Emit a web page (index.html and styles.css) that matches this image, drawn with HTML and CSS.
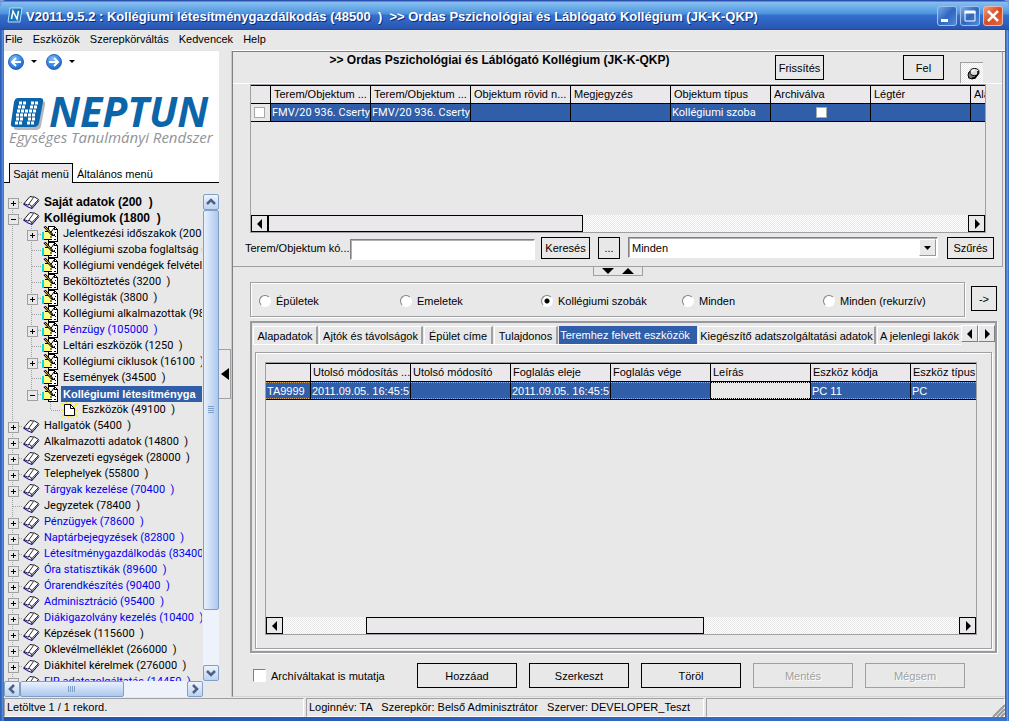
FILE: index.html
```html
<!DOCTYPE html>
<html lang="hu">
<head>
<meta charset="utf-8">
<title>Neptun – Kollégiumi létesítménygazdálkodás</title>
<link rel="stylesheet" href="styles.css">
</head>
<body>
<svg width="0" height="0" class="defs" aria-hidden="true">
  <symbol id="book" viewBox="0 0 17 16">
    <path d="M1 10.500l4 2.500 4 1.500 7-8" fill="none" stroke="#0000e0"/>
    <path d="M1 9.500L7 2.500l3 .5 1.500 0 4 2.500-6.500 7-2.500-2-2 .5z" fill="#fff" stroke="#000" stroke-width=".9"/>
    <path d="M5.500 10.500l5-7" fill="none" stroke="#000" stroke-width=".8"/>
    <path d="M9 12.500v2M1 9.500v1.500" stroke="#000"/>
  </symbol>
  <symbol id="form" viewBox="0 0 17 16">
    <path d="M6.500 0.500h6l3 3v12h-9z" fill="#fff" stroke="#000" shape-rendering="crispEdges"/>
    <path d="M12.500 0v3.500H16" fill="none" stroke="#000" shape-rendering="crispEdges"/>
    <path d="M13 6.500h1M12 8.500h1M13 10.500h1M9 13.500h1M12 13.500h2" stroke="#000"/>
    <path d="M2 6h3l2-1h3v3h2v1.500h-2V13H8v1H2z" fill="#ffff80"/>
    <path d="M3 5.500h3M10 9.500h3M10 11h-2M9 13.500H2" fill="none" stroke="#000"/>
    <path d="M0 6h2v8H0z" fill="#00dede"/>
    <path d="M2.500 0.500l8 8.500" stroke="#000" stroke-width="2.500"/>
    <path d="M3 1l6.500 7" stroke="#f0d000"/>
    <path d="M12 2L8.500 7" stroke="#000"/>
  </symbol>
  <symbol id="page" viewBox="0 0 17 16">
    <path d="M0 1l5 4M0 15l5-4M17 1l-4 4M17 15l-4-4M5 0l2 4M7 16l1-3M11 16l-1-3M0 8h4M13 8h4M10 0v3" stroke="#ffee00" stroke-width="1.500"/>
    <path d="M3.500 2.500h6l4 4v7h-10z" fill="#fff" stroke="#000"/>
    <path d="M9.500 2v4.500H14" fill="none" stroke="#000"/>
  </symbol>
  <symbol id="up" viewBox="0 0 14 14"><path d="M3 9l4-4 4 4" fill="none" stroke="#4d6185" stroke-width="2.500"/></symbol>
  <symbol id="down" viewBox="0 0 14 14"><path d="M3 5l4 4 4-4" fill="none" stroke="#4d6185" stroke-width="2.500"/></symbol>
  <symbol id="left" viewBox="0 0 14 14"><path d="M9 3L5 7l4 4" fill="none" stroke="#4d6185" stroke-width="2.500"/></symbol>
  <symbol id="right" viewBox="0 0 14 14"><path d="M5 3l4 4-4 4" fill="none" stroke="#4d6185" stroke-width="2.500"/></symbol>
  <symbol id="tri-l" viewBox="0 0 10 10"><path d="M7 0v10L2 5z"/></symbol>
  <symbol id="tri-r" viewBox="0 0 10 10"><path d="M3 0v10l5-5z"/></symbol>
  <radialGradient id="ball" cx=".4" cy=".3" r=".75"><stop offset="0" stop-color="#7fc0fa"/><stop offset=".6" stop-color="#3585e0"/><stop offset="1" stop-color="#1c5fc4"/></radialGradient>
</svg>
<div class="window">
  <header class="titlebar">
    <svg class="app-icon" width="16" height="16" viewBox="0 0 16 16"><path d="M3 1h12l-2 14H1z" fill="#1a76bd" stroke="#b8dcf4"/><path d="M4.500 12l1.500-8 4 8 1.500-8" fill="none" stroke="#fff" stroke-width="1.500"/></svg>
    <h1>V2011.9.5.2 : Kollégiumi létesítménygazdálkodás (48500  )  &gt;&gt; Ordas Pszichológiai és Láblógató Kollégium (JK-K-QKP)</h1>
    <div class="win-buttons">
      <button aria-label="Kis méret"><svg width="18" height="18"><path d="M3 12h7v3H3z" fill="#fff"/></svg></button>
      <button aria-label="Teljes méret"><svg width="18" height="18"><path d="M4 5h10v9H4z" fill="none" stroke="#fff"/><path d="M3.500 5h11" stroke="#fff" stroke-width="3"/></svg></button>
      <button class="close" aria-label="Bezárás"><svg width="18" height="18"><path d="M4 4l10 10M14 4L4 14" stroke="#fff" stroke-width="2.500"/></svg></button>
    </div>
  </header>
  <nav class="menubar"><button>File</button><button>Eszközök</button><button>Szerepkörváltás</button><button>Kedvencek</button><button>Help</button></nav>
  <div class="body">
    <aside class="sidebar">
      <div class="brand">
        <div class="history">
          <button aria-label="Vissza"><svg width="16" height="16"><circle cx="8" cy="8" r="7.500" fill="url(#ball)" stroke="#2a66b8"/><path d="M13 8H4M8 4L4 8l4 4" fill="none" stroke="#fff" stroke-width="2"/></svg></button>
          <button aria-label="Vissza lista"><svg width="6" height="4"><path d="M0 0h6L3 3z"/></svg></button>
          <button aria-label="Előre"><svg width="16" height="16"><circle cx="8" cy="8" r="7.500" fill="url(#ball)" stroke="#2a66b8"/><path d="M3 8h9M8 4l4 4-4 4" fill="none" stroke="#fff" stroke-width="2"/></svg></button>
          <button aria-label="Előre lista"><svg width="6" height="4"><path d="M0 0h6L3 3z"/></svg></button>
        </div>
        <svg class="logo" width="210" height="56" viewBox="0 0 210 56">
          <path d="M14 7h22q4 0 3 4l-4 21q-1 4-5 4H11q-4 0-3-4l3-21q0-4 3-4z" fill="#b4b8bc"/>
          <path d="M12 4h22q4 0 3 4l-4 21q-1 4-5 4H8q-4 0-3-4L8 8q1-4 4-4z" fill="#0b65a8"/>
          <path d="M13 9h7M25 9h7M12 13h7M24 13h7M11 17h19M10 21h19M10 25h7M22 25h7M9 29h7M21 29h7" stroke="#fff" stroke-width="3" stroke-dasharray="3 1" fill="none"/>
          <text x="43" y="33" class="logo-name">NEPTUN</text>
          <text x="3" y="49" class="logo-sub">Egységes Tanulmányi Rendszer</text>
        </svg>
      </div>
      <div class="side-tabs"><button class="on">Saját menü</button><button>Általános menü</button></div>
      <div class="tree-area">
        <ul class="tree">
          <li class="first"><i class="g plus"></i><svg><use href="#book"/></svg><b>Saját adatok (200  )</b></li>
          <li><i class="g minus"></i><svg><use href="#book"/></svg><b>Kollégiumok (1800  )</b></li>
          <li><i class="g line"></i><i class="g plus"></i><svg><use href="#form"/></svg><span>Jelentkezési időszakok (2000</span></li>
          <li><i class="g line"></i><i class="g"></i><svg><use href="#form"/></svg><span>Kollégiumi szoba foglaltság (3</span></li>
          <li><i class="g line"></i><i class="g"></i><svg><use href="#form"/></svg><span>Kollégiumi vendégek felvétele</span></li>
          <li><i class="g line"></i><i class="g"></i><svg><use href="#form"/></svg><span>Beköltöztetés (3200  )</span></li>
          <li><i class="g line"></i><i class="g plus"></i><svg><use href="#form"/></svg><span>Kollégisták (3800  )</span></li>
          <li><i class="g line"></i><i class="g"></i><svg><use href="#form"/></svg><span>Kollégiumi alkalmazottak (982</span></li>
          <li class="blue"><i class="g line"></i><i class="g plus"></i><svg><use href="#form"/></svg><span>Pénzügy (105000  )</span></li>
          <li><i class="g line"></i><i class="g"></i><svg><use href="#form"/></svg><span>Leltári eszközök (1250  )</span></li>
          <li><i class="g line"></i><i class="g plus"></i><svg><use href="#form"/></svg><span>Kollégiumi ciklusok (16100  )</span></li>
          <li><i class="g line"></i><i class="g"></i><svg><use href="#form"/></svg><span>Események (34500  )</span></li>
          <li class="selected"><i class="g line"></i><i class="g minus last"></i><svg><use href="#form"/></svg><b>Kollégiumi létesítményga</b></li>
          <li><i class="g line"></i><i class="g none"></i><i class="g last"></i><svg><use href="#page"/></svg><span>Eszközök (49100  )</span></li>
          <li><i class="g plus"></i><svg><use href="#book"/></svg><span>Hallgatók (5400  )</span></li>
          <li><i class="g plus"></i><svg><use href="#book"/></svg><span>Alkalmazotti adatok (14800  )</span></li>
          <li><i class="g plus"></i><svg><use href="#book"/></svg><span>Szervezeti egységek (28000  )</span></li>
          <li><i class="g plus"></i><svg><use href="#book"/></svg><span>Telephelyek (55800  )</span></li>
          <li class="blue"><i class="g plus"></i><svg><use href="#book"/></svg><span>Tárgyak kezelése (70400  )</span></li>
          <li><i class="g"></i><svg><use href="#book"/></svg><span>Jegyzetek (78400  )</span></li>
          <li class="blue"><i class="g plus"></i><svg><use href="#book"/></svg><span>Pénzügyek (78600  )</span></li>
          <li class="blue"><i class="g plus"></i><svg><use href="#book"/></svg><span>Naptárbejegyzések (82800  )</span></li>
          <li class="blue"><i class="g plus"></i><svg><use href="#book"/></svg><span>Létesítménygazdálkodás (83400</span></li>
          <li class="blue"><i class="g plus"></i><svg><use href="#book"/></svg><span>Óra statisztikák (89600  )</span></li>
          <li class="blue"><i class="g plus"></i><svg><use href="#book"/></svg><span>Órarendkészítés (90400  )</span></li>
          <li class="blue"><i class="g plus"></i><svg><use href="#book"/></svg><span>Adminisztráció (95400  )</span></li>
          <li class="blue"><i class="g plus"></i><svg><use href="#book"/></svg><span>Diákigazolvány kezelés (10400  )</span></li>
          <li><i class="g plus"></i><svg><use href="#book"/></svg><span>Képzések (115600  )</span></li>
          <li><i class="g plus"></i><svg><use href="#book"/></svg><span>Oklevélmelléklet (266000  )</span></li>
          <li><i class="g plus"></i><svg><use href="#book"/></svg><span>Diákhitel kérelmek (276000  )</span></li>
          <li class="blue"><i class="g plus"></i><svg><use href="#book"/></svg><span>FIR adatszolgáltatás (14450  )</span></li>
        </ul>
        <div class="xp-v"><button aria-label="Fel görgetés"><svg><use href="#up"/></svg></button><div class="track"><div class="thumb"></div></div><button aria-label="Le görgetés"><svg><use href="#down"/></svg></button></div>
        <div class="xp-h"><button aria-label="Balra görgetés"><svg><use href="#left"/></svg></button><div class="track"><div class="thumb"></div></div><button aria-label="Jobbra görgetés"><svg><use href="#right"/></svg></button></div>
      </div>
    </aside>
    <div class="splitter"><button aria-label="Menü elrejtése"><svg width="9" height="12"><path d="M9 0v12L1 6z"/></svg></button></div>
    <main class="main">
      <section class="top-panel">
        <div class="heading">
          <h2>&gt;&gt; Ordas Pszichológiai és Láblógató Kollégium (JK-K-QKP)</h2>
          <button class="btn refresh">Frissítés</button>
          <button class="btn fel">Fel</button>
          <button class="pin" aria-label="Rögzítés"><svg width="14" height="14" viewBox="0 0 14 14"><path d="M2 11L6 8" stroke="#000"/><ellipse cx="6" cy="8" rx="4" ry="4" fill="#777" stroke="#000"/><ellipse cx="8.500" cy="5" rx="4.500" ry="3.500" fill="#ddd" stroke="#000"/><path d="M6 5q1-2 3-2" stroke="#fff" stroke-width="1.500" fill="none"/><path d="M12 4v3l-3 4H6" fill="none" stroke="#000" stroke-width="1.500"/></svg></button>
        </div>
        <div class="grid upper">
          <div class="grid-view">
            <table>
              <colgroup><col class="check"><col><col><col><col><col><col><col><col></colgroup>
              <tr><th></th><th>Terem/Objektum ...</th><th>Terem/Objektum ...</th><th>Objektum rövid n...</th><th>Megjegyzés</th><th>Objektum típus</th><th>Archiválva</th><th>Légtér</th><th>Ala</th></tr>
              <tr><td class="plain"><input type="checkbox" aria-label="Sor kijelölése"></td><td>FMV/20 936. Csertyi</td><td>FMV/20 936. Csertyi</td><td></td><td></td><td>Kollégiumi szoba</td><td class="mid"><input type="checkbox" aria-label="Archiválva"></td><td></td><td></td></tr>
            </table>
          </div>
          <div class="bar"><button aria-label="Balra"><svg><use href="#tri-l"/></svg></button><div class="rail"><div class="knob"></div></div><button aria-label="Jobbra"><svg><use href="#tri-r"/></svg></button></div>
        </div>
        <div class="search">
          <label for="code">Terem/Objektum kó...</label><input type="text" id="code">
          <button class="btn">Keresés</button><button class="btn dots">...</button>
          <div class="combo"><select aria-label="Szűrő"><option>Minden</option></select><span><svg width="7" height="4"><path d="M0 0h7L3.500 4z"/></svg></span></div>
          <button class="btn filter">Szűrés</button>
        </div>
        <div class="collapse"><button aria-label="Le"><svg width="12" height="6"><path d="M0 0h12L6 6z"/></svg></button><button aria-label="Fel"><svg width="12" height="6"><path d="M0 6h12L6 0z"/></svg></button></div>
      </section>
      <section class="levels">
        <div class="radios">
          <label><input type="radio" name="level">Épületek</label>
          <label><input type="radio" name="level">Emeletek</label>
          <label><input type="radio" name="level" checked>Kollégiumi szobák</label>
          <label><input type="radio" name="level">Minden</label>
          <label><input type="radio" name="level">Minden (rekurzív)</label>
        </div>
        <button class="btn go">-&gt;</button>
      </section>
      <section class="tab-panel">
        <div class="tabs">
          <div class="tab-list"><button>Alapadatok</button><button>Ajtók és távolságok</button><button>Épület címe</button><button>Tulajdonos</button><button class="on">Teremhez felvett eszközök</button><button>Kiegészítő adatszolgáltatási adatok</button><button>A jelenlegi lakók</button></div>
          <div class="tab-scroll"><button aria-label="Előző fül"><svg width="10" height="10"><use href="#tri-l"/></svg></button><button aria-label="Következő fül"><svg width="10" height="10"><use href="#tri-r"/></svg></button></div>
        </div>
        <div class="sheet">
          <div class="grid lower">
            <div class="grid-view">
              <table>
                <colgroup><col class="user"><col><col><col><col><col><col><col></colgroup>
                <tr><th></th><th>Utolsó módosítás ...</th><th>Utolsó módosító</th><th>Foglalás eleje</th><th>Foglalás vége</th><th>Leírás</th><th>Eszköz kódja</th><th>Eszköz típus</th></tr>
                <tr><td>TA9999</td><td>2011.09.05. 16:45:5</td><td></td><td>2011.09.05. 16:45:5</td><td></td><td class="plain"></td><td>PC 11</td><td>PC</td></tr>
              </table>
            </div>
            <div class="bar"><button aria-label="Balra"><svg><use href="#tri-l"/></svg></button><div class="rail"><div class="knob"></div></div><button aria-label="Jobbra"><svg><use href="#tri-r"/></svg></button></div>
          </div>
        </div>
      </section>
      <footer class="actions">
        <label><input type="checkbox">Archíváltakat is mutatja</label>
        <button class="btn">Hozzáad</button><button class="btn">Szerkeszt</button><button class="btn">Töröl</button><button class="btn" disabled>Mentés</button><button class="btn" disabled>Mégsem</button>
      </footer>
    </main>
  </div>
  <div class="status"><span class="s1">Letöltve 1 / 1 rekord.</span><span class="s2">Loginnév: TA   Szerepkör: Belső Adminisztrátor   Szerver: DEVELOPER_Teszt</span><span class="s3"></span>
    <svg class="grip" width="13" height="13"><path d="M1 13L13 1M5 13l8-8M9 13l4-4" stroke="#999" stroke-width="2"/></svg></div>
</div>
</body>
</html>
```
FILE: styles.css
```css
* { box-sizing: border-box; }
body {
  margin: 0;
  font: 11px/16px "Liberation Sans", Arial, sans-serif;
  color: #000;
  background: #7f97d8;
}
button, input, select { font: inherit; color: inherit; margin: 0; }
button { padding: 0; border: 0; background: none; }
svg { display: block; }
.defs { position: absolute; }

.window {
  height: 100vh;
  display: flex;
  flex-direction: column;
  padding: 0 4px 4px;
  background: linear-gradient(90deg, #2b58b0, #3b74cf 2px, #6d9fe2 3px, #2450a8 4px, #3b74cf calc(100% - 4px), #2450a8 calc(100% - 3px), #7aaaea calc(100% - 2px), #2f62bd);
  border-radius: 7px 7px 0 0;
  overflow: hidden;
}

/* title bar */
.titlebar {
  flex: none;
  height: 30px;
  margin: 0 -4px;
  padding: 0 6px 0 7px;
  display: flex;
  align-items: center;
  background: linear-gradient(#2d4fb0 0, #2d4fb0 1px, #86c0f0 2px, #6aaae8 8px, #4b90dc 14px, #3470cc 15px, #2c5fbe 24px, #2a54ac 29px, #1f3f94 30px);
}
.app-icon { margin-right: 3px; }
h1 {
  flex: 1;
  margin: 4px 0 0;
  font-size: 13px;
  line-height: 18px;
  color: #fff;
  white-space: pre;
  text-shadow: 1px 1px #0d2b78;
}
.win-buttons { display: flex; gap: 3px; margin-top: 2px; }
.win-buttons button {
  width: 20px;
  height: 20px;
  border: 1px solid #9cc0ee;
  border-radius: 3px;
  background: linear-gradient(135deg, #7aaae6, #2f66bf 50%, #4d8bd8);
}
.win-buttons .close { background: linear-gradient(135deg, #f0a080, #d84a20 50%, #e8683c); border-color: #e8b8a8; }

.menubar { flex: none; height: 20px; display: flex; gap: 10px; padding: 0 0 2px 1px; background: #e8e8e8; }

.body { flex: 1; min-height: 0; display: flex; background: #e8e8e8; }

/* sidebar */
.sidebar { flex: none; width: 215px; display: flex; flex-direction: column; }
.brand { background: #fff; height: 113px; border-top: 1px solid #e4e4e4; }
.history { display: flex; align-items: center; padding: 3px 4px 0; }
.history button:nth-child(even) { margin: 0 9px 0 7px; }
.logo { margin: 24px 0 0 2px; }
.logo-name { font: italic bold 41px "Open Sans", sans-serif; fill: #0b65a8; }
.logo-sub { font: italic 15px "Open Sans", sans-serif; fill: #909498; }
.side-tabs { flex: none; display: flex; height: 20px; background: #fff; }
.side-tabs::before { content: ""; width: 5px; border-bottom: 1px solid #000; }
.side-tabs button { border-bottom: 1px solid #000; padding: 2px 4px 0; }
.side-tabs button:last-child { flex: 1; text-align: left; }
.side-tabs .on { width: 64px; padding: 0; border: 1px solid #000; border-bottom: 0; background: #ebe8ec; }

.tree-area {
  flex: 1;
  min-height: 0;
  margin-top: 11px;
  display: grid;
  grid-template: minmax(0, 1fr) 16px / minmax(0, 1fr) 16px;
}
.tree { margin: 0; padding: 0 1px 0 0; list-style: none; overflow: hidden; }
.tree li { display: flex; height: 16px; overflow: hidden; }
.tree li > svg { flex: none; width: 17px; height: 16px; }
.tree b, .tree span { padding-left: 4px; white-space: pre; }
.tree span { font-family: Roboto, "Liberation Sans", sans-serif; }
.tree b { font-size: 12px; }
.tree .blue { color: #0000f0; }
.tree .selected b { flex: 1; margin-left: 2px; padding-left: 2px; background: #315ea8; color: #fff; overflow: hidden; font-size: 11px; }
.g {
  flex: none;
  width: 19px;
  height: 16px;
  background:
    repeating-linear-gradient(#a0a0a0 0 1px, transparent 1px 2px) 8px 0 / 1px 16px no-repeat,
    repeating-linear-gradient(90deg, #a0a0a0 0 1px, transparent 1px 2px) 9px 8px / 10px 1px no-repeat;
}
.line { background: repeating-linear-gradient(#a0a0a0 0 1px, transparent 1px 2px) 8px 0 / 1px 16px no-repeat; }
.last { background-size: 1px 8px, 10px 1px; }
.none { background: none; }
.first .g { background-position: 8px 8px, 9px 8px; }
.plus::before, .minus::before {
  content: "";
  display: block;
  width: 9px;
  height: 9px;
  margin: 4px 0 0 4px;
  border: 1px solid #a0a0a0;
}
.minus::before { background: linear-gradient(#000, #000) center / 5px 1px no-repeat #e8e8e8; }
.plus::before { background: linear-gradient(#000, #000) center / 5px 1px no-repeat, linear-gradient(#000, #000) center / 1px 5px no-repeat #e8e8e8; }

.xp-v, .xp-h { display: flex; }
.xp-v { flex-direction: column; }
.xp-v button, .xp-h button {
  flex: none;
  width: 16px;
  height: 16px;
  border: 1px solid #7f9fc8;
  border-radius: 2px;
  background: linear-gradient(#eef4fc, #bcd3ef);
}
.xp-v button svg, .xp-h button svg { width: 14px; height: 14px; }
.track { flex: 1; background: #eef2fb; }
.thumb { border: 1px solid #7f9fc8; border-radius: 2px; }
.xp-v .thumb {
  height: 88%;
  background: repeating-linear-gradient(#7f9fc8 0 1px, transparent 1px 2px) center / 6px 8px no-repeat, linear-gradient(90deg, #e8f1fc, #acc8ee);
}
.xp-h .thumb {
  width: 62%;
  height: 16px;
  background: repeating-linear-gradient(90deg, #7f9fc8 0 1px, transparent 1px 2px) center / 8px 6px no-repeat, linear-gradient(#e8f1fc, #acc8ee);
}

.splitter { flex: none; width: 13px; display: flex; align-items: center; }
.splitter button {
  width: 12px;
  height: 50px;
  display: grid;
  place-items: center;
  border: 1px solid #a0a0a0;
  border-left: 0;
  background: #ebe8ec;
}

/* main area */
.main {
  flex: 1;
  min-width: 0;
  margin-top: 1px;
  display: flex;
  flex-direction: column;
  border-left: 1px solid #808084;
  border-top: 1px solid #808084;
  border-bottom: 1px solid #d4d4d4;
  box-shadow: -1px 0 #c8c8cc, 0 -1px #fff;
}
.top-panel {
  position: relative;
  flex: none;
  margin-right: 2px;
  padding-bottom: 4px;
  border-right: 1px solid #a0a0a4;
  border-bottom: 1px solid #a0a0a4;
}
.heading { display: flex; height: 32px; padding: 3px 19px 0 17px; border-bottom: 1px solid #fff; }
h2 { flex: 1; margin: 0; padding-right: 26px; text-align: center; font-size: 12px; line-height: 10px; white-space: pre; }
.btn { flex: none; border: 1px solid #000; background: #e8e8e8; }
.btn:disabled { color: #a0a0a0; border-color: #a0a0a0; text-shadow: 1px 1px #fff; }
.refresh { width: 49px; height: 25px; margin-right: 79px; }
.fel { width: 41px; height: 25px; margin-right: 16px; }
.pin, .rail { background: repeating-conic-gradient(#fff 0 25%, #e8e8e8 0 50%) 0 0 / 2px 2px; }
.pin { width: 23px; height: 21px; margin-top: 7px; padding: 2px 0 0 5px; border: solid #a0a0a4; border-width: 1px 0 0 1px; }

.grid { display: flex; flex-direction: column; border: 1px solid #a0a0a4; }
.upper { height: 149px; margin: 0 16px 0 17px; }
.grid-view { flex: 1; min-height: 0; overflow: hidden; }
table { width: 100%; table-layout: fixed; border-collapse: separate; border-spacing: 0; border-top: 1px solid #000; }
.upper table { width: 820px; }
.lower table { width: 745px; }
col { width: 100px; }
col.check { width: 20px; }
col.user { width: 45px; }
th, td { padding: 0; height: 18px; border: solid #000; border-width: 0 1px 1px 0; text-align: left; white-space: pre; overflow: hidden; line-height: 17px; }
th { padding-left: 3px; font-weight: normal; background: #ebe8ec; }
td { padding-left: 1px; background: #315ea8; color: #fff; line-height: 16px; }
.upper td { font-family: Roboto, "Liberation Sans", sans-serif; }
td.plain { background: #e8e8e8; padding-left: 3px; }
td.mid { text-align: center; }
.lower th { padding-left: 2px; }
.lower td { background-image: repeating-linear-gradient(90deg, #d8a860 0 1px, transparent 1px 2px), repeating-linear-gradient(90deg, #d8a860 0 1px, transparent 1px 2px); background-position: top, bottom; background-size: 100% 1px; background-repeat: no-repeat; }
.lower td.plain { background-image: repeating-linear-gradient(90deg, #000 0 1px, transparent 1px 2px), repeating-linear-gradient(90deg, #000 0 1px, transparent 1px 2px); }
td input { display: inline-block; appearance: none; width: 11px; height: 11px; border: 1px solid #a8a8a8; background: #fff; vertical-align: middle; }
.bar { flex: none; display: flex; height: 17px; }
.bar button { width: 17px; display: grid; place-items: center; border: 1px solid #000; background: #ebe8ec; }
.bar svg { width: 10px; height: 10px; }
.rail { flex: 1; display: flex; }
.knob { width: 45%; border: 1px solid #000; background: #ebe8ec; }
.lower .rail { padding-left: 83px; }
.lower .knob { width: 57%; }

.search { display: flex; height: 29px; padding: 4px 8px 0 12px; }
.search label { width: 105px; line-height: 22px; white-space: nowrap; }
.search input, .combo {
  height: 21px;
  border: 1px solid;
  border-color: #808084 #fff #fff #808084;
  box-shadow: inset 1px 1px #b0b0b4;
  background: #fff;
}
.search input { width: 185px; margin: 2px 6px 0 0; padding: 0 3px; }
.search .btn { width: 49px; height: 22px; margin-right: 8px; }
.search .dots { width: 22px; }
.combo { position: relative; flex: 1; margin-right: 9px; display: flex; }
.combo select { flex: 1; appearance: none; border: 0; padding: 0 3px; background: none; }
.combo span { position: absolute; right: 1px; top: 1px; width: 17px; height: 17px; display: grid; place-items: center; background: #ebe8ec; border: 1px solid; border-color: #fff #999 #999 #fff; pointer-events: none; }
.search .filter { width: 47px; margin: 0; }
.collapse {
  position: absolute;
  left: 360px;
  top: 100%;
  width: 50px;
  height: 10px;
  display: flex;
  justify-content: space-evenly;
  align-items: center;
  border: 1px solid #a0a0a4;
}

.levels { flex: none; display: flex; align-items: flex-start; margin: 15px 8px 4px 17px; }
.radios {
  flex: 1;
  height: 35px;
  display: flex;
  align-items: center;
  padding: 3px 0 0 8px;
  border: 1px solid #a0a0a4;
  box-shadow: inset 1px 1px #fff, 1px 1px #fff;
}
.radios label { flex: 0 1 141px; display: flex; align-items: center; gap: 5px; white-space: nowrap; }
.radios input { appearance: none; width: 12px; height: 12px; border-radius: 50%; border: 1px solid; border-color: #808084 #fff #fff #808084; background: #fff; }
.radios input:checked { background: radial-gradient(circle, #000 2px, #fff 3px); }
.go { width: 26px; height: 25px; margin: 4px 0 0 6px; }

.tab-panel {
  flex: 1;
  min-height: 0;
  margin: 0 8px 10px 17px;
  padding: 2px 0 2px 1px;
  display: flex;
  flex-direction: column;
  border: 2px solid #9a9a9e;
  box-shadow: 1px 1px #fff;
}
.tabs { flex: none; display: flex; height: 20px; }
.tab-list { flex: 1; min-width: 0; display: flex; overflow: hidden; border-bottom: 1px solid #fff; }
.tab-list button { flex: none; width: 65px; margin: 1px 1px 0 0; border: solid; border-width: 1px 2px 0 1px; border-color: #fff #a0a0a4 #a0a0a4 #fff; white-space: nowrap; }
.tab-list button:nth-child(2) { width: 104px; }
.tab-list button:nth-child(3) { width: 69px; }
.tab-list button:nth-child(4) { width: 64px; }
.tab-list .on { width: 138px; padding-right: 6px; border: 0; background: #315ea8; color: #fff; }
.tab-list button:nth-child(6) { width: 178px; }
.tab-list button:nth-child(7) { width: 84px; border-right: 0; }
.tab-scroll { display: flex; }
.tab-scroll button { width: 17px; height: 17px; display: grid; place-items: center; background: #ebe8ec; border: 1px solid; border-color: #fff #808084 #808084 #fff; }
.sheet {
  flex: 1;
  min-height: 0;
  display: flex;
  margin: 7px 3px 0 2px;
  padding: 9px 14px 13px 9px;
  border: 1px solid #a0a0a4;
  box-shadow: inset 1px 1px #fff, 1px 1px #fff;
}
.lower { flex: 1; min-width: 0; }

.actions { flex: none; display: flex; align-items: center; gap: 12px; padding: 0 40px 8px 20px; }
.actions label { flex: 1; display: flex; align-items: center; gap: 5px; }
.actions input { appearance: none; width: 13px; height: 13px; border: 1px solid; border-color: #808084 #fff #fff #808084; background: #fff; }
.actions .btn { width: 100px; height: 25px; }

.status { position: relative; flex: none; display: flex; gap: 2px; height: 20px; padding-top: 1px; background: #e8e8e8; }
.status span { padding-left: 2px; white-space: pre; border: 1px solid; border-color: #a0a0a4 #fff #fff #a0a0a4; }
.s1 { width: 300px; }
.s2 { width: 398px; }
.s3 { flex: 1; }
.grip { position: absolute; right: 0; bottom: 0; }
```
